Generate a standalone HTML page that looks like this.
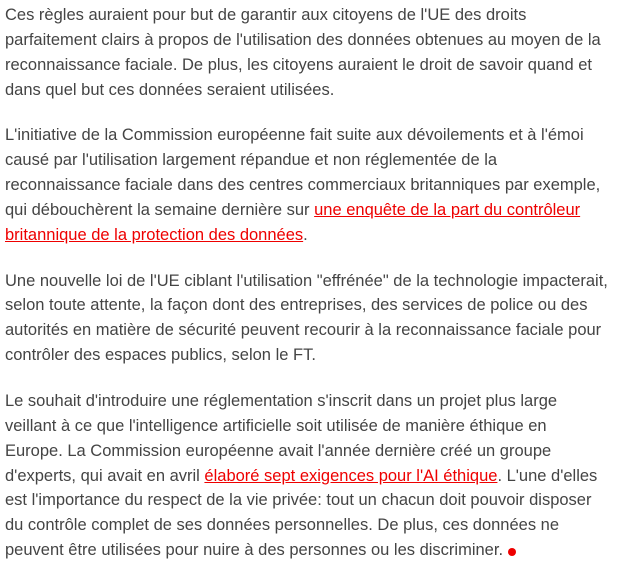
<!DOCTYPE html>
<html><head><meta charset="utf-8"><style>
html,body{margin:0;padding:0;background:#fff;width:627px;height:572px;overflow:hidden}
body{font-family:"Liberation Sans",Arial,sans-serif;font-size:16.5px;line-height:24.85px;color:#444}
.w{position:absolute;left:5px;top:3px;width:625px;white-space:nowrap}
p{margin:0 0 21px 0}
a{color:#e00;text-decoration:underline}
.dot{display:inline-block;width:8px;height:8px;border-radius:50%;background:#e00;margin-left:5px;vertical-align:-1px}
</style></head><body><div class="w">
<p>Ces règles auraient pour but de garantir aux citoyens de l'UE des droits<br>parfaitement clairs à propos de l'utilisation des données obtenues au moyen de la<br>reconnaissance faciale. De plus, les citoyens auraient le droit de savoir quand et<br>dans quel but ces données seraient utilisées.</p>
<p>L'initiative de la Commission européenne fait suite aux dévoilements et à l'émoi<br>causé par l'utilisation largement répandue et non réglementée de la<br>reconnaissance faciale dans des centres commerciaux britanniques par exemple,<br>qui débouchèrent la semaine dernière sur <a>une enquête de la part du contrôleur<br>britannique de la protection des données</a>.</p>
<p>Une nouvelle loi de l'UE ciblant l'utilisation "effrénée" de la technologie impacterait,<br>selon toute attente, la façon dont des entreprises, des services de police ou des<br>autorités en matière de sécurité peuvent recourir à la reconnaissance faciale pour<br>contrôler des espaces publics, selon le FT.</p>
<p>Le souhait d'introduire une réglementation s'inscrit dans un projet plus large<br>veillant à ce que l'intelligence artificielle soit utilisée de manière éthique en<br>Europe. La Commission européenne avait l'année dernière créé un groupe<br>d'experts, qui avait en avril <a>élaboré sept exigences pour l'AI éthique</a>. L'une d'elles<br>est l'importance du respect de la vie privée: tout un chacun doit pouvoir disposer<br>du contrôle complet de ses données personnelles. De plus, ces données ne<br>peuvent être utilisées pour nuire à des personnes ou les discriminer.<span class="dot"></span></p>
</div></body></html>
